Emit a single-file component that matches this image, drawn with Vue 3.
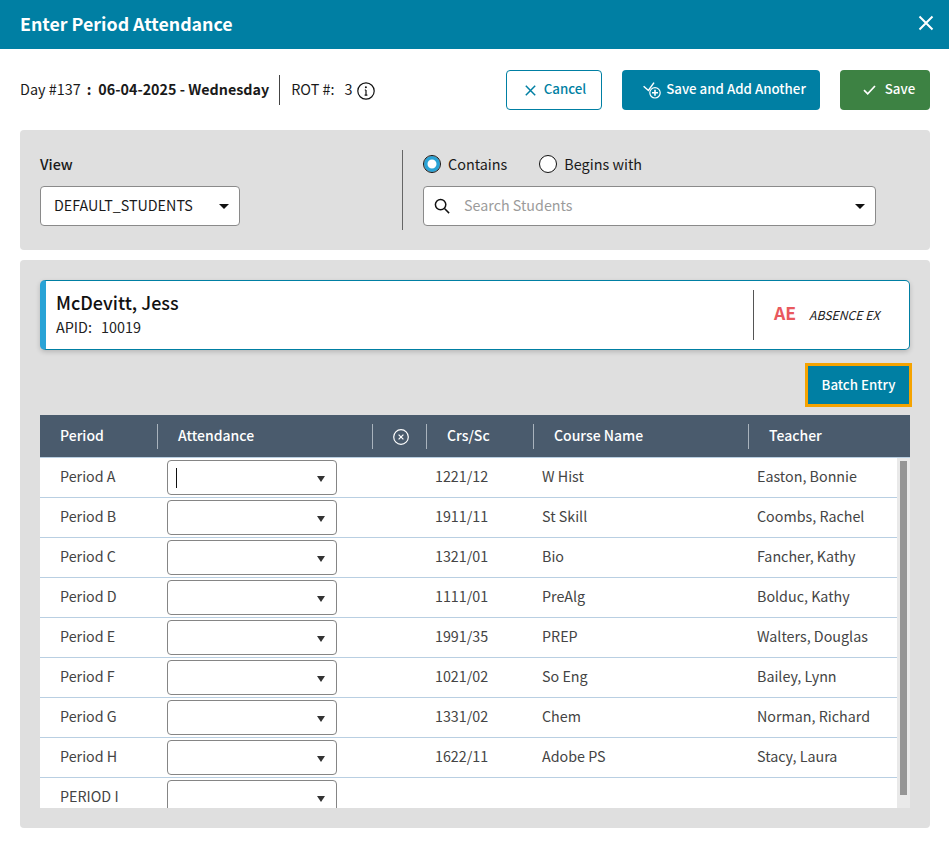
<script setup>
const rows = [
  { period: 'Period A', crs: '1221/12', course: 'W Hist', teacher: 'Easton, Bonnie', caret: true },
  { period: 'Period B', crs: '1911/11', course: 'St Skill', teacher: 'Coombs, Rachel' },
  { period: 'Period C', crs: '1321/01', course: 'Bio', teacher: 'Fancher, Kathy' },
  { period: 'Period D', crs: '1111/01', course: 'PreAlg', teacher: 'Bolduc, Kathy' },
  { period: 'Period E', crs: '1991/35', course: 'PREP', teacher: 'Walters, Douglas' },
  { period: 'Period F', crs: '1021/02', course: 'So Eng', teacher: 'Bailey, Lynn' },
  { period: 'Period G', crs: '1331/02', course: 'Chem', teacher: 'Norman, Richard' },
  { period: 'Period H', crs: '1622/11', course: 'Adobe PS', teacher: 'Stacy, Laura' },
  { period: 'PERIOD I', crs: '', course: '', teacher: '' }
]
</script>

<template>
  <div class="modal">
    <header class="title-bar">
      <h1>Enter Period Attendance</h1>
      <svg class="close" width="16" height="16" viewBox="0 0 16 16" fill="none" stroke="#fff" stroke-width="2">
        <path d="M1.5 1.5l13 13M14.5 1.5l-13 13" />
      </svg>
    </header>

    <main class="content">
      <section class="toolbar">
        <div class="day">
          <span>Day #137</span>
          <b class="colon">:</b>
          <b class="date">06-04-2025 - Wednesday</b>
          <i class="vline"></i>
          <span>ROT #:</span>
          <span class="rot">3</span>
          <svg width="18" height="18" viewBox="0 0 18 18" fill="none" stroke="#111">
            <circle cx="9" cy="9" r="8.2" stroke-width="1.2" />
            <path d="M9 8v5.2M7.6 13.2h2.8M7.8 8H9" stroke-width="1.2" />
            <circle cx="8.9" cy="5.2" r="1" fill="#111" stroke="none" />
          </svg>
        </div>
        <div class="actions">
          <button class="btn cancel">
            <svg width="11" height="11" viewBox="0 0 11 11" fill="none" stroke="#007fa3" stroke-width="1.5"><path d="M.8.8l9.4 9.4M10.2.8L.8 10.2" /></svg>
            Cancel
          </button>
          <button class="btn add">
            <svg width="18" height="17" viewBox="0 0 18 17" fill="none" stroke="#fff" stroke-width="1.2">
              <path d="M.6 4.2l4.8 4.3L11 .6" stroke-width="1.5" />
              <circle cx="12" cy="10.8" r="5.2" fill="#007fa3" />
              <path d="M12 7.8v6M9 10.8h6" stroke-width="1.6" />
            </svg>
            Save and Add Another
          </button>
          <button class="btn save">
            <svg width="13" height="10" viewBox="0 0 13 10" fill="none" stroke="#fff" stroke-width="1.7"><path d="M1 5.2l3.7 3.6L12 1" /></svg>
            Save
          </button>
        </div>
      </section>

      <section class="panel filters">
        <div class="view">
          <label class="strong">View</label>
          <div class="field view-field">
            <span>DEFAULT_STUDENTS</span>
            <i class="arrow"></i>
          </div>
        </div>
        <div class="search">
          <div class="radios">
            <span class="radio on"></span><span class="radio-label">Contains</span>
            <span class="radio second"></span><span class="radio-label">Begins with</span>
          </div>
          <div class="field search-field">
            <svg width="16" height="16" viewBox="0 0 16 16" fill="none" stroke="#111" stroke-width="1.5">
              <circle cx="6.6" cy="6.6" r="5.2" /><path d="M10.5 10.5l4.6 4.6" />
            </svg>
            <span class="placeholder">Search Students</span>
            <i class="arrow"></i>
          </div>
        </div>
      </section>

      <section class="panel body">
        <div class="student">
          <div class="who">
            <div class="name">McDevitt, Jess</div>
            <div class="apid"><span>APID:</span><span class="apid-num">10019</span></div>
          </div>
          <div class="status">
            <b>AE</b>
            <em>ABSENCE EX</em>
          </div>
        </div>

        <div class="batch-row">
          <button class="batch">Batch Entry</button>
        </div>

        <div class="table">
          <div class="thead cols">
            <div>Period</div>
            <div>Attendance</div>
            <div class="clear-col">
              <svg width="16" height="16" viewBox="0 0 16 16" fill="none" stroke="#fff" stroke-width="1.2">
                <circle cx="8" cy="8" r="7.3" /><path d="M5.6 5.6l4.8 4.8M10.4 5.6l-4.8 4.8" />
              </svg>
            </div>
            <div>Crs/Sc</div>
            <div>Course Name</div>
            <div>Teacher</div>
          </div>
          <div class="tbody">
            <div class="rows">
              <div v-for="r in rows" :key="r.period" class="row cols">
                <div>{{ r.period }}</div>
                <div>
                  <div class="cell-select">
                    <i v-if="r.caret" class="caret"></i>
                    <i class="arrow small"></i>
                  </div>
                </div>
                <div></div>
                <div>{{ r.crs }}</div>
                <div>{{ r.course }}</div>
                <div>{{ r.teacher }}</div>
              </div>
            </div>
            <div class="track"><div class="thumb"></div></div>
          </div>
        </div>
      </section>
    </main>
  </div>
</template>

<style>
html, body { margin: 0; background: #fff; }
</style>

<style scoped>
.modal {
  width: 949px;
  height: 847px;
  overflow: hidden;
  font-family: "Noto Sans CJK SC", "Noto Sans", sans-serif;
  font-size: 14.4px;
  color: #1a1a1a;
  background: #fff;
}
.title-bar {
  height: 49px;
  background: #007fa3;
  display: flex;
  align-items: center;
  justify-content: space-between;
  padding: 0 15px 0 20px;
  color: #fff;
}
.title-bar h1 { margin: 0 0 4px; font-size: 17.8px; line-height: 28px; font-weight: 700; }
.close { margin-bottom: 4px; }
.content {
  padding: 21px 19px 0 20px;
  display: flex;
  flex-direction: column;
}
.toolbar {
  height: 40px;
  display: flex;
  align-items: center;
  justify-content: space-between;
}
.day { display: flex; align-items: center; line-height: 18px; height: 30px; }
.day span, .day b { margin-top: -2px; }
.day b { font-weight: 700; }
.day .date { font-size: 14.3px; }
.day .colon { margin: -2px 7px 0 6px; }
.vline { width: 1px; height: 30px; background: #444; margin: 0 11px 0 10px; }
.rot { margin: 0 5px 0 10px; }
.day svg { margin-top: 1px; }
.actions { display: flex; gap: 20px; }
.btn {
  height: 40px;
  border-radius: 4px;
  font: inherit;
  font-weight: 500;
  font-size: 13.3px;
  line-height: 18px;
  display: flex;
  align-items: center;
  justify-content: center;
  box-sizing: border-box;
  cursor: pointer;
  border: 1px solid transparent;
  padding: 0 0 2px;
}
.btn svg { margin-top: 2px; }
.cancel { width: 96px; color: #007fa3; background: #fff; border-color: #007fa3; gap: 8px; padding-left: 3px; }
.add { width: 198px; color: #fff; background: #007fa3; gap: 5px; padding-left: 7px; }
.save { width: 90px; color: #fff; background: #3d8243; gap: 9px; padding-left: 8px; }
.panel { background: #dfdfdf; border-radius: 4px; }
.filters {
  margin-top: 20px;
  height: 120px;
  box-sizing: border-box;
  padding: 20px;
  display: flex;
}
.view { width: 362px; display: flex; flex-direction: column; }
.strong { font-weight: 500; line-height: 27px; height: 36px; }
.field {
  height: 40px;
  box-sizing: border-box;
  background: #fff;
  border: 1px solid #8a8a8a;
  border-radius: 4px;
  display: flex;
  align-items: center;
  position: relative;
}
.field > span { margin-top: -3px; }
.view-field { width: 200px; padding-left: 13px; font-size: 14.3px; }
.search {
  border-left: 1px solid #666;
  padding-left: 20px;
  height: 80px;
  width: 453px;
  display: flex;
  flex-direction: column;
}
.radios { height: 36px; display: flex; align-items: flex-start; padding-top: 5px; box-sizing: border-box; line-height: 17px; }
.radio {
  width: 18px;
  height: 18px;
  box-sizing: border-box;
  border-radius: 50%;
  border: 1.3px solid #111;
  background: #fff;
  flex: none;
}
.radio.on { border: 1px solid #111; box-shadow: inset 0 0 0 3.5px #29a3d6; }
.radio.second { margin-left: 32px; }
.radio-label { margin-left: 7px; }
.search-field { width: 453px; padding-left: 10px; }
.search-field .placeholder { color: #9b9b9b; margin: -4px 0 0 14px; font-size: 14.3px; }
.arrow {
  position: absolute;
  right: 10px;
  top: 17px;
  border-left: 5px solid transparent;
  border-right: 5px solid transparent;
  border-top: 5px solid #111;
}
.arrow.small { right: 11px; top: 15px; border-left-width: 4px; border-right-width: 4px; border-top: 6px solid #333; }
.body {
  margin-top: 10px;
  height: 568px;
  box-sizing: border-box;
  padding: 20px;
}
.student {
  height: 70px;
  box-sizing: border-box;
  background: #fff;
  border: 1px solid #007fa3;
  border-left: 6px solid #29a3d6;
  border-radius: 5px;
  box-shadow: 0 2px 5px rgba(0, 0, 0, 0.18);
  display: flex;
  align-items: center;
  justify-content: space-between;
  padding: 0 0 0 10px;
}
.name { font-size: 18px; font-weight: 500; line-height: 24px; color: #111; }
.apid { font-size: 14.4px; line-height: 20px; margin-top: 3px; color: #222; }
.apid-num { margin-left: 9px; }
.who { margin-top: -4px; }
.status {
  height: 50px;
  width: 156px;
  box-sizing: border-box;
  border-left: 1px solid #555;
  display: flex;
  align-items: center;
  padding-left: 20px;
}
.status b { color: #e9595e; font-size: 17.6px; font-weight: 700; margin-top: -5px; }
.status em { font-size: 12.2px; margin-left: 13px; color: #222; }
.batch-row {
  display: flex;
  justify-content: flex-end;
  margin-top: 16px;
  height: 38px;
  padding-right: 1px;
}
.batch {
  width: 101px;
  height: 38px;
  background: #007fa3;
  color: #fff;
  border: 0;
  outline: 3px solid #f5a300;
  border-radius: 0;
  font: inherit;
  font-weight: 500;
  font-size: 13.3px;
  line-height: 18px;
  padding: 0 0 1px;
}
.table { margin-top: 11px; }
.cols { display: grid; grid-template-columns: 117px 215px 54px 107px 215px 1fr; }
.thead {
  height: 43px;
  box-sizing: border-box;
  background: #4a5b6d;
  color: #fff;
  border-bottom: 1px solid #b9cfe2;
  align-items: center;
}
.thead > div {
  height: 25px;
  line-height: 23px;
  padding-left: 20px;
  border-left: 1px solid #a9b3bd;
  font-size: 14px;
  font-weight: 500;
}
.thead > div:first-child { border-left: 0; }
.thead .clear-col { padding: 2px 0 0 2px; box-sizing: border-box; display: flex; align-items: center; justify-content: center; }
.tbody { height: 350px; display: flex; overflow: hidden; background: #fff; }
.rows { flex: 1; min-width: 0; }
.row {
  height: 40px;
  box-sizing: border-box;
  border-bottom: 1px solid #b9cfe2;
  align-items: center;
  color: #444;
  font-size: 14.3px;
  line-height: 18px;
}
.row > div { padding-left: 9px; padding-bottom: 4px; }
.row > div:first-child { padding-left: 20px; }
.row > div:nth-child(2) { padding-left: 10px; padding-bottom: 0; }
.cell-select {
  width: 170px;
  height: 35px;
  box-sizing: border-box;
  background: #fff;
  border: 1px solid #858585;
  border-radius: 4px;
  position: relative;
}
.caret { position: absolute; left: 8px; top: 7px; width: 1px; height: 20px; background: #111; }
.track { width: 13px; flex: none; background: #e9e9e9; box-sizing: border-box; padding: 3px 3px 0; }
.thumb { width: 7px; height: 334px; background: #959595; }
</style>
